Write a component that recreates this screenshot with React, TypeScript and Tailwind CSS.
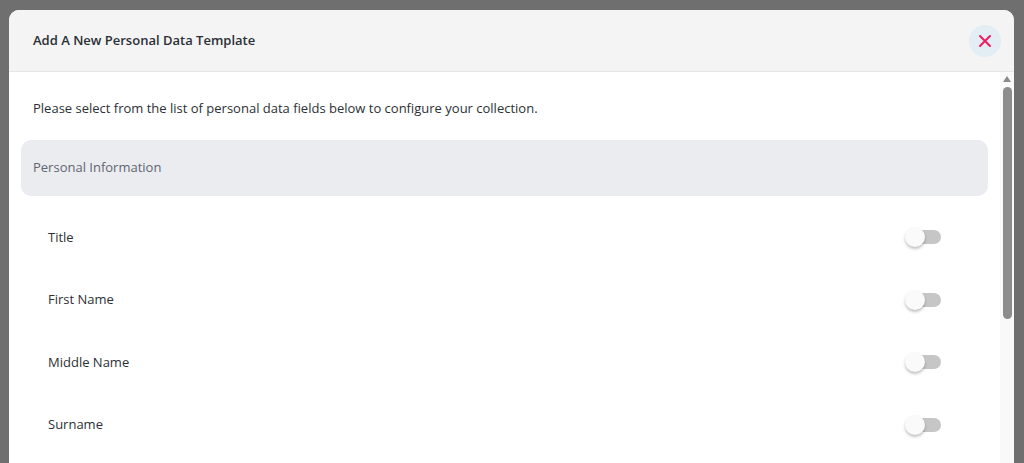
import React from 'react';

const fields = ['Title', 'First Name', 'Middle Name', 'Surname'];

const Toggle: React.FC = () => (
  <div className="relative w-[36px] h-[20px] flex items-center">
    <div className="w-[34px] h-[14px] ml-[2px] rounded-full bg-[#c6c6c6]" />
    <div className="absolute left-0 top-0 w-[20px] h-[20px] rounded-full bg-[#fafafa] shadow-[0_2px_3px_rgba(0,0,0,0.25)]" />
  </div>
);

const FieldRow: React.FC<{ label: string }> = ({ label }) => (
  <div className="flex items-center justify-between h-[62.5px] pl-[27px] pr-[47px]">
    <span className="text-[13px] text-[#2d3035]">{label}</span>
    <Toggle />
  </div>
);

export default function App() {
  return (
    <div
      className="w-[1024px] h-[463px] overflow-hidden bg-[#6f6f6f] pt-[10px] pl-[9px] pr-[10px]"
      style={{ fontFamily: '"Open Sans", "Noto Sans", sans-serif' }}
    >
      <div className="h-full bg-white rounded-t-[10px] overflow-hidden flex flex-col">
        <div className="h-[62px] shrink-0 bg-[#f4f4f4] border-b border-[#e6e6e6] flex items-center justify-between pl-[24px] pr-[13px]">
          <h2 className="text-[13px] font-semibold text-[#2b2f36]">Add A New Personal Data Template</h2>
          <button className="w-[32px] h-[32px] rounded-full bg-[#e2edf4] flex items-center justify-center">
            <svg width="16" height="16" viewBox="0 0 16 16" fill="none" stroke="#ee1c5e" strokeWidth="2" strokeLinecap="round">
              <path d="M3 3 L13 13 M13 3 L3 13" />
            </svg>
          </button>
        </div>
        <div className="flex flex-1 min-h-0">
          <div className="flex-1 min-w-0 pl-[12px] pr-[12px]">
            <p className="text-[13px] text-[#2d3035] pl-[12px] pt-[26px] pb-[22px] leading-[20px]">
              Please select from the list of personal data fields below to configure your collection.
            </p>
            <div className="h-[56px] rounded-[10px] bg-[#ebecf0] flex items-center pl-[12px]">
              <span className="text-[13px] text-[#5f6670]">Personal Information</span>
            </div>
            <div className="pt-[10px]">
              {fields.map((f) => (
                <FieldRow key={f} label={f} />
              ))}
            </div>
          </div>
          <div className="w-[14px] shrink-0 bg-[#f9f9f9] flex flex-col items-center pt-[4px]">
            <svg width="8" height="6" viewBox="0 0 8 6">
              <path d="M4 0 L8 6 L0 6 Z" fill="#8a8a8a" />
            </svg>
            <div className="mt-[5px] w-[9px] h-[232px] rounded-full bg-[#8c8c8c]" />
          </div>
        </div>
      </div>
    </div>
  );
}
